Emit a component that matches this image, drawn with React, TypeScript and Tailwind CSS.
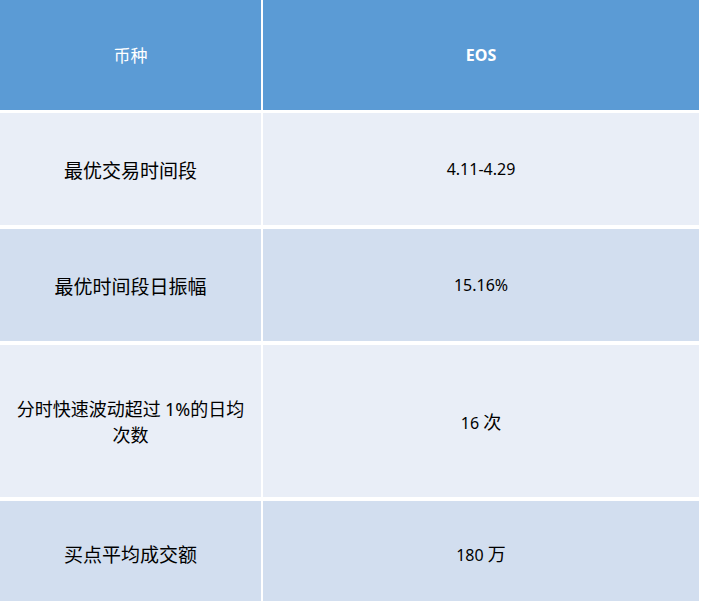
import React from "react";

const cjk = "font-['Noto_Sans_CJK_SC',sans-serif]";
const latin = "font-['Noto_Sans','Noto_Sans_CJK_SC',sans-serif]";

type Row = { label: React.ReactNode; value: React.ReactNode; h: string; bg: string; size: string };

const rows: Row[] = [
  { label: "最优交易时间段", value: "4.11-4.29", h: "h-[112px]", bg: "bg-[#e9eef7]", size: "text-[19px]" },
  { label: "最优时间段日振幅", value: "15.16%", h: "h-[112px]", bg: "bg-[#d2deef]", size: "text-[19px]" },
  {
    label: (
      <>
        分时快速波动超过 <span className={latin}>1%</span>的日均
        <br />
        次数
      </>
    ),
    value: (
      <>
        16 <span className={cjk + " text-[18px]"}>次</span>
      </>
    ),
    h: "h-[152px]",
    bg: "bg-[#e9eef7]",
    size: "text-[18px]",
  },
  {
    label: "买点平均成交额",
    value: (
      <>
        180 <span className={cjk + " text-[18px]"}>万</span>
      </>
    ),
    h: "h-[104px]",
    bg: "bg-[#d2deef]",
    size: "text-[19px]",
  },
];

export default function App() {
  return (
    <div className="w-[701px] h-[601px] overflow-hidden bg-white">
      <div className="grid grid-cols-[261px_436px] gap-x-[2px] h-[110px]">
        <div className={`bg-[#5b9bd5] flex items-center justify-center text-white text-[17px] ${cjk}`}>
          币种
        </div>
        <div className={`bg-[#5b9bd5] flex items-center justify-center text-white text-[16px] font-bold ${latin}`}>
          EOS
        </div>
      </div>
      {rows.map((r, i) => (
        <div
          key={i}
          className={`grid grid-cols-[261px_436px] gap-x-[2px] ${r.h} ${i === 0 ? "mt-[3px]" : "mt-[4px]"}`}
        >
          <div
            className={`${r.bg} flex items-center justify-center text-center text-black ${r.size} leading-[25px] whitespace-nowrap ${cjk}`}
          >
            <div>{r.label}</div>
          </div>
          <div className={`${r.bg} flex items-center justify-center text-black text-[16px] ${latin}`}>
            <div>{r.value}</div>
          </div>
        </div>
      ))}
    </div>
  );
}
